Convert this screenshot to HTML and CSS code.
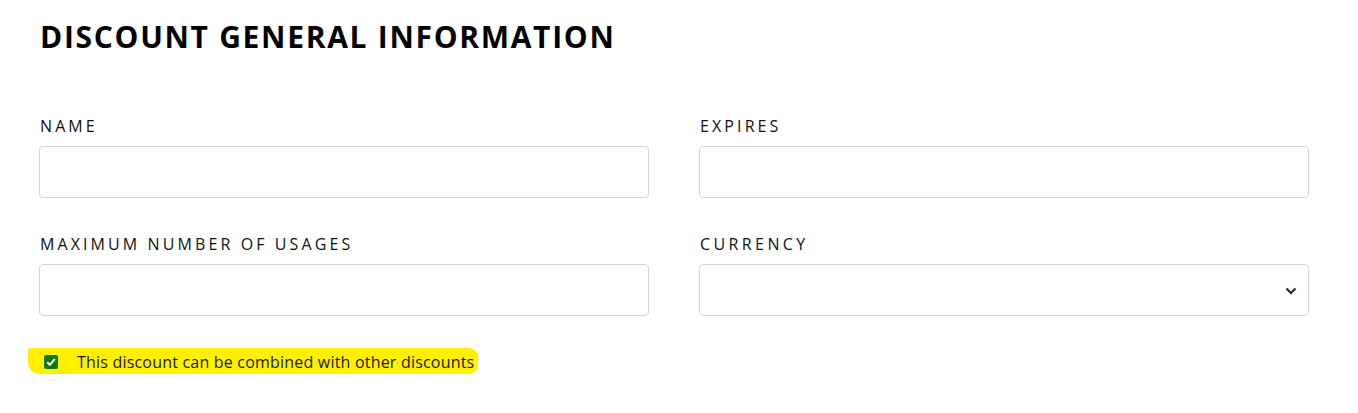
FILE: index.html
```html
<!DOCTYPE html>
<html>
<head>
<meta charset="utf-8">
<link rel="stylesheet" href="styles.css">
</head>
<body>
<div class="page">
  <h1 class="title">DISCOUNT GENERAL INFORMATION</h1>
  <div class="grid">
    <div class="field">
      <label class="label">NAME</label>
      <input class="input" type="text">
    </div>
    <div class="field">
      <label class="label">EXPIRES</label>
      <input class="input" type="text">
    </div>
    <div class="field">
      <label class="label">MAXIMUM NUMBER OF USAGES</label>
      <input class="input" type="text">
    </div>
    <div class="field">
      <label class="label label-alt">CURRENCY</label>
      <div class="select">
        <svg class="chev" width="12" height="8" viewBox="0 0 12 8"><path d="M1.5 1.5 L6 6 L10.5 1.5" fill="none" stroke="#222" stroke-width="2"/></svg>
      </div>
    </div>
  </div>
  <div class="check-row">
    <span class="highlight">
      <svg class="box" width="14" height="14" viewBox="0 0 14 14"><rect x="0" y="0" width="14" height="14" rx="2" fill="#0b7a0b"/><path d="M3.2 7.2 L5.8 9.8 L10.8 4.2" fill="none" stroke="#fff" stroke-width="2"/></svg>
      <span class="check-text">This discount can be combined with other discounts</span>
    </span>
  </div>
</div>
</body>
</html>
```
FILE: styles.css
```css
html, body {
  margin: 0;
  padding: 0;
  background: #fff;
}
.page {
  padding: 20px 49px 0 39px;
  font-family: "Open Sans", "Liberation Sans", sans-serif;
  color: #111;
}
.title {
  margin: 0 0 0 1px;
  font-family: "Open Sans", "Liberation Sans", sans-serif;
  font-weight: 700;
  font-size: 30px;
  letter-spacing: 1.7px;
  line-height: 34px;
  color: #000;
}
.grid {
  display: grid;
  grid-template-columns: 610px 610px;
  column-gap: 50px;
  row-gap: 36px;
  margin-top: 62px;
}
.field {
  display: flex;
  flex-direction: column;
}
.label {
  font-family: "Open Sans", "Liberation Sans", sans-serif;
  font-size: 16px;
  letter-spacing: 3.1px;
  line-height: 20px;
  color: #111;
  margin-left: 1px;
  margin-bottom: 10px;
}
.label-alt {
  letter-spacing: 3.4px;
}
.input, .select {
  box-sizing: border-box;
  width: 610px;
  height: 52px;
  border: 1px solid #d6d6d6;
  border-radius: 4px;
  background: #fff;
  margin: 0;
  padding: 0;
}
.select {
  display: flex;
  align-items: center;
  justify-content: flex-end;
  padding-right: 11px;
}
.chev {
  display: block;
  margin-top: 2px;
}
.check-row {
  margin-top: 32px;
  margin-left: -11px;
  display: flex;
}
.highlight {
  display: inline-flex;
  align-items: center;
  background: #fff000;
  border-radius: 3px 9px 9px 12px;
  padding: 5px 4px 3px 16px;
  height: 18px;
}
.box {
  display: block;
  margin-right: 19px;
}
.check-text {
  font-family: "Open Sans", "Liberation Sans", sans-serif;
  font-size: 16px;
  color: #1a1a1a;
  letter-spacing: 0.2px;
  line-height: 18px;
}
```
